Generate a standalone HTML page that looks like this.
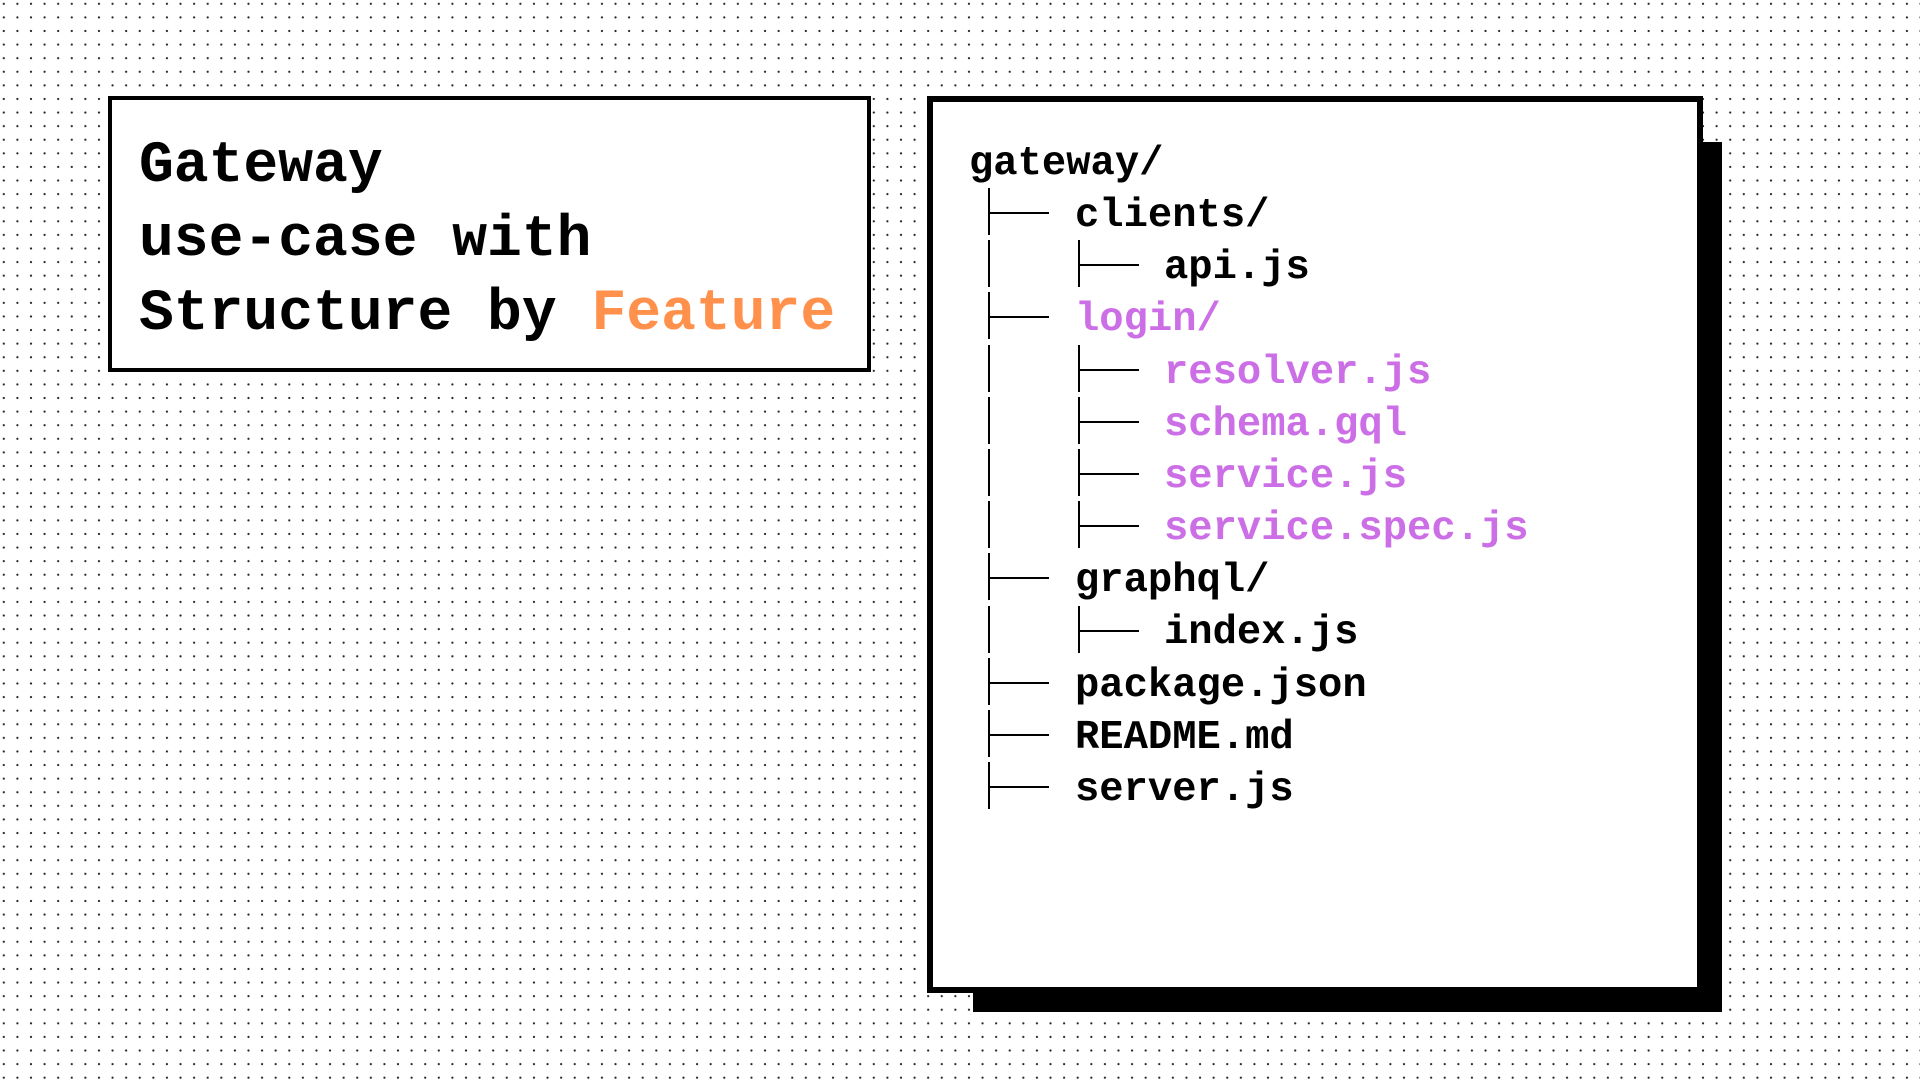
<!DOCTYPE html>
<html><head><meta charset="utf-8"><style>
html,body{margin:0;padding:0}
body{width:1920px;height:1080px;position:relative;overflow:hidden;background:#fff;
background-image:radial-gradient(circle,#222 0.9px,transparent 1.3px);background-size:13.6px 13.6px;background-position:-3px -3px;
font-family:"Liberation Mono",monospace;font-weight:bold}
.box1{position:absolute;left:108px;top:96px;width:755px;height:268px;border:4px solid #000;background:#fff}
.title{position:absolute;left:139px;font-size:58px;line-height:1;color:#000}
.shadow{position:absolute;left:973px;top:142px;width:749px;height:870px;background:#000}
.box2{position:absolute;left:927px;top:96px;width:764px;height:885px;border:6px solid #000;background:#fff}
.t{position:absolute;font-size:40.5px;line-height:1;white-space:pre}
.p{color:#cc6ee6}
.v{position:absolute;width:2px;background:#000}
.h{position:absolute;height:2px;background:#000}
</style></head><body>
<div class="box1"></div>
<div class="title" style="top:138px">Gateway</div>
<div class="title" style="top:212px">use-case with</div>
<div class="title" style="top:286px">Structure by <span style="color:#ff914d">Feature</span></div>
<div class="shadow"></div>
<div class="box2"></div>
<div class="t" style="left:969px;top:144px">gateway/</div>
<div class="t" style="left:1075px;top:196px">clients/</div>
<div class="t" style="left:1164px;top:248px">api.js</div>
<div class="t p" style="left:1075px;top:300px">login/</div>
<div class="t p" style="left:1164px;top:353px">resolver.js</div>
<div class="t p" style="left:1164px;top:405px">schema.gql</div>
<div class="t p" style="left:1164px;top:457px">service.js</div>
<div class="t p" style="left:1164px;top:509px">service.spec.js</div>
<div class="t" style="left:1075px;top:561px">graphql/</div>
<div class="t" style="left:1164px;top:613px">index.js</div>
<div class="t" style="left:1075px;top:666px">package.json</div>
<div class="t" style="left:1075px;top:718px">README.md</div>
<div class="t" style="left:1075px;top:770px">server.js</div>
<div id="lines"></div>
<script>
var L=[[0],[0,1],[0],[0,1],[0,1],[0,1],[0,1],[0],[0,1],[0],[0],[0]];
var h='';
for(var i=0;i<12;i++){var c=213+i*52.2;
h+='<div class="v" style="left:988px;top:'+(c-25)+'px;height:47px"></div>';
if(L[i].length==1){h+='<div class="h" style="left:988px;top:'+(c-1)+'px;width:61px"></div>';}
else{h+='<div class="v" style="left:1078px;top:'+(c-25)+'px;height:47px"></div><div class="h" style="left:1078px;top:'+(c-1)+'px;width:61px"></div>';}
}
document.getElementById('lines').innerHTML=h;
</script>
</body></html>
